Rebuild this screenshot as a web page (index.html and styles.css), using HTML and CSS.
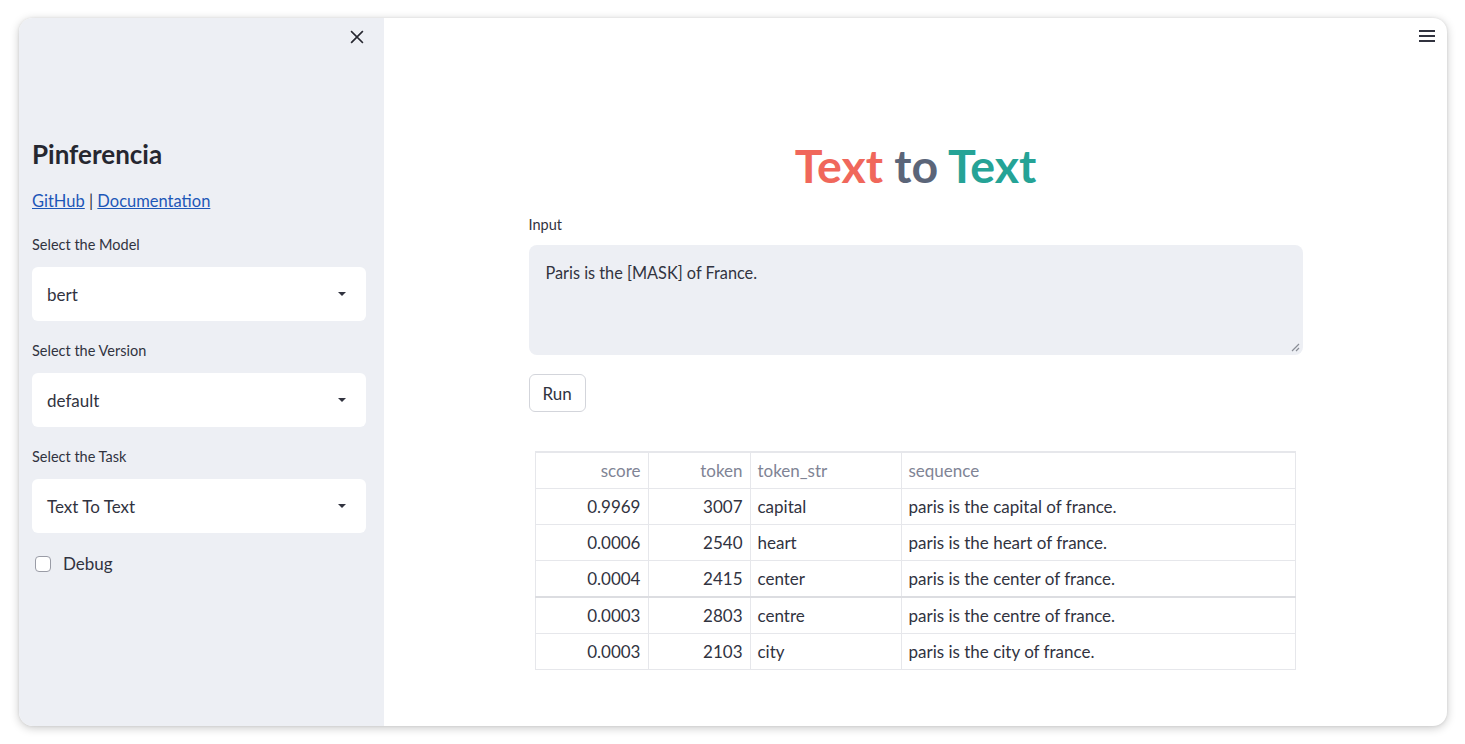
FILE: index.html
```html
<!DOCTYPE html>
<html>
<head>
<meta charset="utf-8">
<link rel="stylesheet" href="styles.css">
</head>
<body>
<div class="window">
  <aside class="sidebar">
    <div class="close-row">
      <svg class="close" width="16" height="16" viewBox="0 0 16 16"><path d="M2 2 L14 14 M14 2 L2 14" stroke="#262730" stroke-width="2" stroke-linecap="square"/></svg>
    </div>
    <h1 class="brand">Pinferencia</h1>
    <p class="links"><a href="#">GitHub</a> | <a href="#">Documentation</a></p>
    <div class="field">
      <label class="label">Select the Model</label>
      <div class="select"><span>bert</span><span class="caret"></span></div>
    </div>
    <div class="field">
      <label class="label">Select the Version</label>
      <div class="select"><span>default</span><span class="caret"></span></div>
    </div>
    <div class="field">
      <label class="label">Select the Task</label>
      <div class="select"><span>Text To Text</span><span class="caret"></span></div>
    </div>
    <div class="check"><span class="box"></span><span>Debug</span></div>
  </aside>
  <main class="main">
    <svg class="menu" width="18" height="14" viewBox="0 0 18 14"><path d="M1 2 H17 M1 7 H17 M1 12 H17" stroke="#31333f" stroke-width="2"/></svg>
    <div class="content">
      <h1 class="title"><span class="red">Text</span> <span class="gray">to</span> <span class="teal">Text</span></h1>
      <label class="label">Input</label>
      <div class="textarea">Paris is the [MASK] of France.
        <svg class="grip" width="9" height="9" viewBox="0 0 9 9"><path d="M8 1 L1 8 M8 5 L5 8" stroke="#8a8d96" stroke-width="1.2"/></svg>
      </div>
      <button class="btn">Run</button>
      <table class="df">
        <thead>
          <tr><th class="num c1">score</th><th class="num c2">token</th><th class="c3">token_str</th><th>sequence</th></tr>
        </thead>
        <tbody>
          <tr><td class="num">0.9969</td><td class="num">3007</td><td>capital</td><td>paris is the capital of france.</td></tr>
          <tr><td class="num">0.0006</td><td class="num">2540</td><td>heart</td><td>paris is the heart of france.</td></tr>
          <tr><td class="num">0.0004</td><td class="num">2415</td><td>center</td><td>paris is the center of france.</td></tr>
          <tr class="dark"><td class="num">0.0003</td><td class="num">2803</td><td>centre</td><td>paris is the centre of france.</td></tr>
          <tr><td class="num">0.0003</td><td class="num">2103</td><td>city</td><td>paris is the city of france.</td></tr>
        </tbody>
      </table>
    </div>
  </main>
</div>
</body>
</html>
```

FILE: styles.css
```css
* { box-sizing: border-box; }
html, body { margin: 0; padding: 0; background: #ffffff; }
body {
  font-family: "Source Sans Pro", Lato, "Noto Sans", sans-serif;
  color: #31333f;
  width: 1465px;
  height: 744px;
  overflow: hidden;
}
.window {
  position: relative;
  margin: 18px 0 0 19px;
  width: 1428px;
  height: 708px;
  border-radius: 14px;
  overflow: hidden;
  display: flex;
  background: #fff;
  box-shadow: 0 2px 10px rgba(0,0,0,0.22), 0 0 3px rgba(0,0,0,0.08);
}
.sidebar {
  width: 365px;
  flex: none;
  background: #edeff4;
  padding: 0 18px 0 13px;
}
.close-row {
  height: 26px;
  display: flex;
  justify-content: flex-end;
  align-items: flex-end;
  padding-right: 2px;
}
.close { display: block; width: 14px; height: 14px; }
.brand {
  margin: 92px 0 0 0;
  font-size: 26px;
  font-weight: 700;
  line-height: 36px;
  color: #262730;
}
.links {
  margin: 17px 0 0 0;
  font-size: 16.5px;
  line-height: 24px;
}
.links a { color: #1d57b8; text-decoration: underline; }
.field { margin-top: 22px; }
.field + .field { margin-top: 20px; }
.label {
  display: block;
  font-size: 14.5px;
  line-height: 20px;
  color: #31333f;
}
.select {
  margin-top: 12px;
  height: 54px;
  background: #fff;
  border-radius: 6px;
  display: flex;
  align-items: center;
  justify-content: space-between;
  padding: 0 20px 0 15px;
  font-size: 17px;
}
.caret {
  width: 0; height: 0;
  border-left: 4.5px solid transparent;
  border-right: 4.5px solid transparent;
  border-top: 4.5px solid #31333f;
}
.check {
  margin-top: 19px;
  display: flex;
  align-items: center;
  gap: 12px;
  font-size: 17px;
  line-height: 24px;
  padding-left: 3px;
}
.box {
  width: 16px; height: 16px;
  border: 1.5px solid #9a9ca6;
  border-radius: 4px;
  background: #fff;
}
.main {
  position: relative;
  flex: 1;
  display: flex;
  justify-content: center;
}
.menu { position: absolute; top: 11px; right: 11px; }
.content { width: 774px; padding-top: 118px; }
.title {
  margin: 0;
  text-align: center;
  font-size: 46.5px;
  font-weight: 700;
  line-height: 58px;
}
.red { color: #f0675b; }
.gray { color: #5b6579; }
.teal { color: #25a396; }
.content > .label { margin-top: 21px; }
.textarea {
  position: relative;
  margin-top: 10px;
  height: 110px;
  background: #edeff4;
  border-radius: 8px;
  padding: 16px 17px;
  font-size: 16.3px;
  line-height: 24px;
}
.grip { position: absolute; right: 3px; bottom: 3px; }
.btn {
  margin-top: 19px;
  height: 38px;
  padding: 0 13px;
  background: #fff;
  border: 1px solid #d3d5db;
  border-radius: 6px;
  font-family: inherit;
  font-size: 17px;
  color: #31333f;
}
.df {
  margin: 39px 0 0 6px;
  width: 761px;
  border-collapse: collapse;
  font-size: 17px;
  border-top: 2px solid #e6e7eb;
}
.df th, .df td {
  border: 1px solid #e6e7eb;
  height: 36.4px;
  padding: 0 7px;
  text-align: left;
  font-weight: 400;
}
.df th { color: #808495; height: 36px; }
.df .num { text-align: right; }
.df .c1 { width: 113px; }
.df .c2 { width: 102px; }
.df .c3 { width: 151px; }
.df tr.dark td { border-top: 2px solid #dcdde1; }
```
